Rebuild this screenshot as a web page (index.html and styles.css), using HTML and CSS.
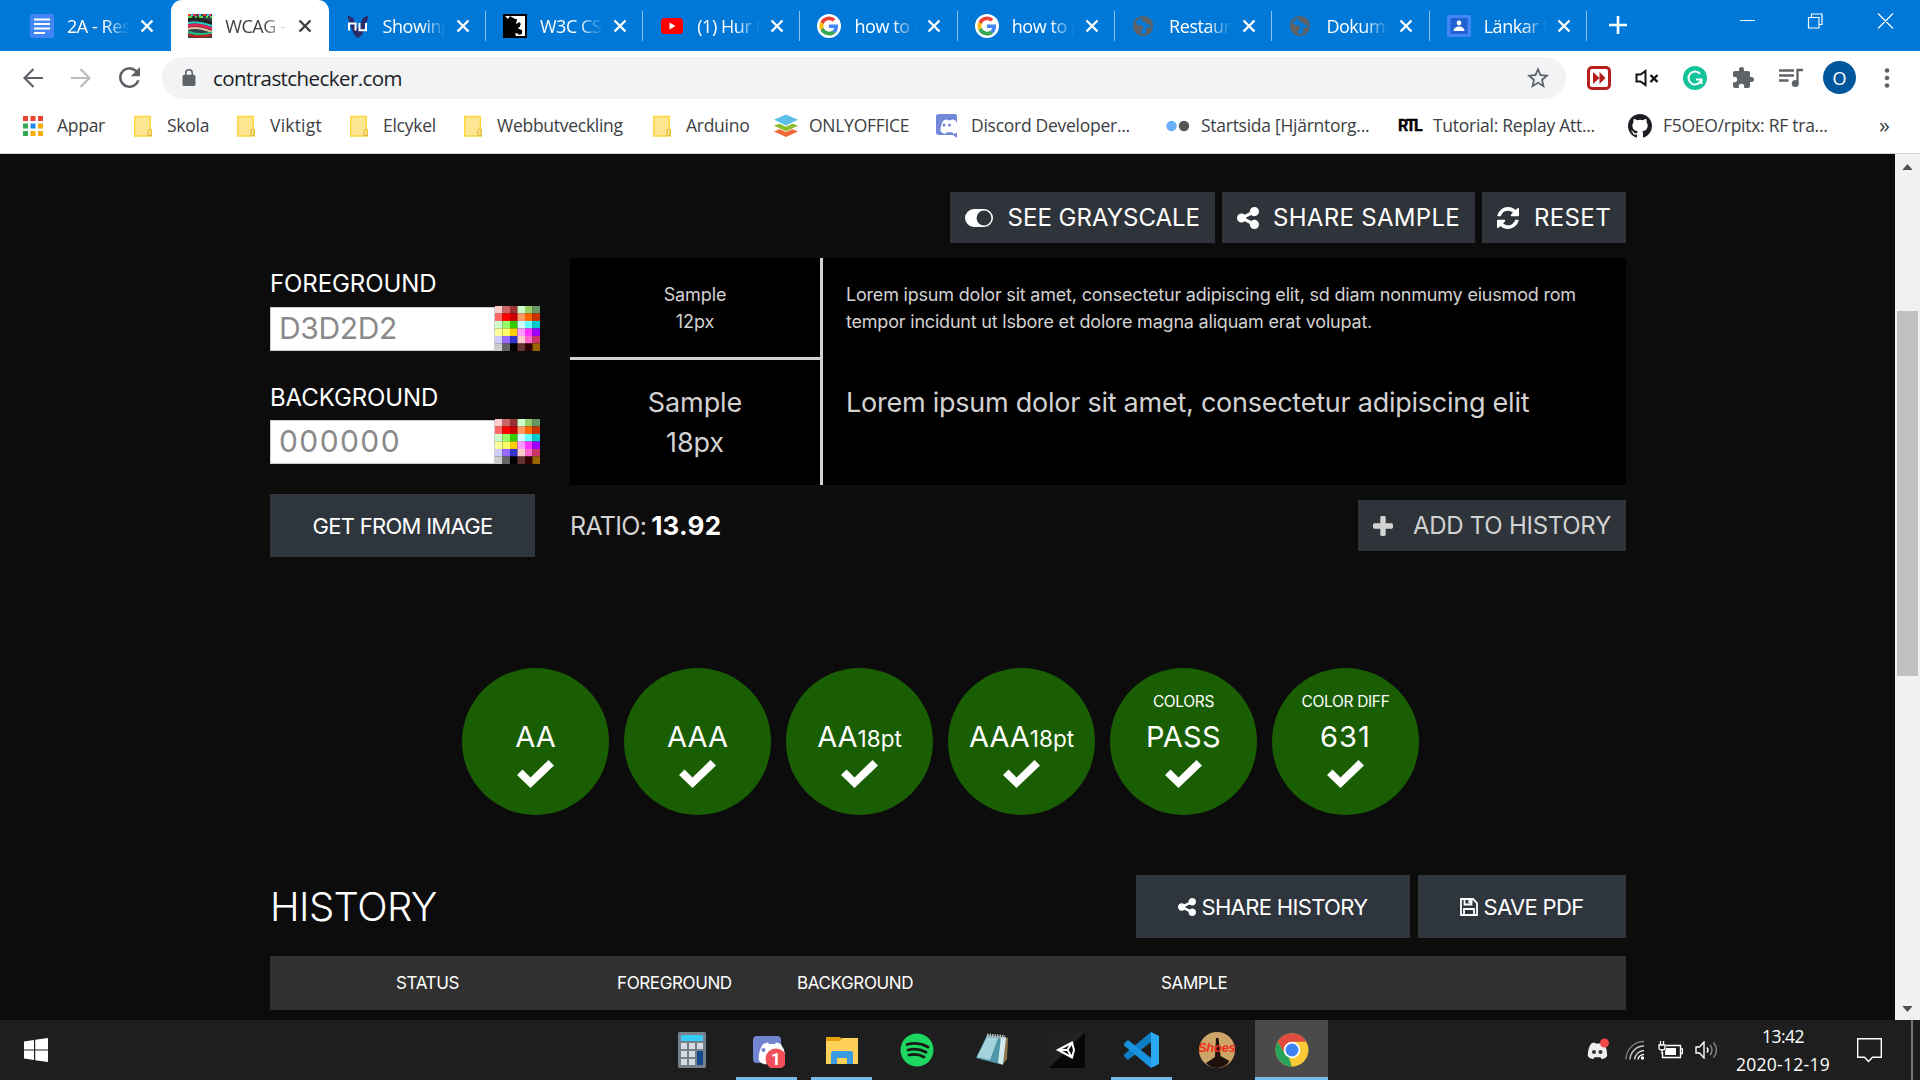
FILE: index.html
```html
<!DOCTYPE html>
<html lang="sv">
<head>
<meta charset="utf-8">
<title>WCAG - Contrast Checker</title>
<link rel="stylesheet" href="styles.css">
</head>
<body>
<svg class="sprites" aria-hidden="true">
  <symbol id="close" viewBox="0 0 14 14"><path d="M1.5 1.5l11 11M12.5 1.5l-11 11" stroke="currentColor" stroke-width="2.4" fill="none"/></symbol>
  <symbol id="docs" viewBox="0 0 24 24"><rect width="24" height="24" rx="2.5" fill="#4285f4"/><path d="M4 5.5h16M4 10h16M4 14.500h16M4 19h11" stroke="#fff" stroke-width="2"/></symbol>
  <symbol id="stripes" viewBox="0 0 24 24"><rect width="24" height="24" fill="#35404a"/><path d="M0 1h24" stroke="#e33" stroke-width="2" stroke-dasharray="3 2"/><path d="M0 1h24" stroke="#3cf" stroke-width="2" stroke-dasharray="2 6" stroke-dashoffset="-3"/><path d="M0 3h24" stroke="#5d4" stroke-width="2" stroke-dasharray="4 3 2 2"/><path d="M0 6q8-3 24 3" stroke="#222" stroke-width="3" fill="none"/><path d="M0 9q10-2 24 3" stroke="#2cc" stroke-width="2" fill="none"/><path d="M0 12q10-3 24 3" stroke="#d25" stroke-width="3" fill="none"/><path d="M0 15q9-3 24 3" stroke="#e8c0a0" stroke-width="2" fill="none"/><path d="M0 18q10 4 24 1" stroke="#2b8" stroke-width="2.500" fill="none"/><path d="M0 21q10 3 24 0" stroke="#b22" stroke-width="2.500" fill="none"/></symbol>
  <symbol id="nu" viewBox="0 0 24 24"><path d="M1 1l6 3 5 11 5-11 6-3-7 20-4 3-4-3z" fill="#2b2a6b"/><path d="M3 16.500v-7h6.500v7M13.500 9v7.300h6.500V9" fill="none" stroke="#fff" stroke-width="2"/></symbol>
  <symbol id="w3c" viewBox="0 0 24 24"><rect width="24" height="24" fill="#000"/><path d="M2 2h20v20h-9l-1-3 4 1 2-3-3-3 3-4-2-2-2 2-3-1 1-4-5-3-2 3z" fill="#fff"/><path d="M9 5h5l-1 5 3-1 1 4-4 1-1-3-3-1 2-3zM15 15l4 1v4l-4 1 2-3z" fill="#000"/></symbol>
  <symbol id="youtube" viewBox="0 0 24 24"><rect x="1" y="4" width="22" height="16" rx="3.500" fill="#f00"/><path d="M9.500 8.500v7l6-3.500z" fill="#fff"/></symbol>
  <symbol id="google" viewBox="0 0 48 48"><circle cx="24" cy="24" r="24" fill="#fff"/><g transform="translate(5 5) scale(.79)"><path fill="#EA4335" d="M24 9.500c3.540 0 6.710 1.220 9.210 3.600l6.850-6.850C35.900 2.380 30.470 0 24 0 14.620 0 6.510 5.380 2.560 13.220l7.980 6.190C12.430 13.720 17.740 9.500 24 9.500z"/><path fill="#4285F4" d="M46.980 24.550c0-1.570-.15-3.090-.38-4.550H24v9.020h12.940c-.58 2.960-2.260 5.480-4.780 7.180l7.730 6c4.510-4.180 7.090-10.360 7.090-17.650z"/><path fill="#FBBC05" d="M10.530 28.590c-.48-1.450-.76-2.990-.76-4.590s.27-3.140.76-4.590l-7.980-6.190C.92 16.460 0 20.120 0 24c0 3.880.92 7.540 2.560 10.780l7.970-6.190z"/><path fill="#34A853" d="M24 48c6.480 0 11.930-2.130 15.890-5.810l-7.730-6c-2.150 1.450-4.920 2.300-8.160 2.300-6.260 0-11.570-4.220-13.470-9.910l-7.980 6.190C6.510 42.620 14.620 48 24 48z"/></g></symbol>
  <symbol id="globe" viewBox="0 0 24 24"><circle cx="11" cy="12" r="9" fill="none" stroke="#5f6368" stroke-width="2.200"/><path d="M3 9c3 3 7 1 8 4s-3 3-2 6l1 2C5 21 1 15 3 9zM10 3c1 3-2 4 2 5s3 4 7 3l1-1c-1-4-5-8-10-7zM14 14l4-1 1 3-5 4z" fill="#5f6368"/></symbol>
  <symbol id="classroom" viewBox="0 0 24 24"><rect width="24" height="22" y="1" rx="1.500" fill="#4285f4"/><rect x="3.500" y="4" width="17" height="16" fill="#1d62d0"/><circle cx="12" cy="9" r="2.400" fill="#fff"/><path d="M6.500 17c0-3 3-4.500 5.500-4.500s5.500 1.500 5.500 4.500z" fill="#fff"/></symbol>
  <symbol id="folder" viewBox="0 0 18 22"><path d="M.7 1.500h15.600v13.500h1v6H.7z" fill="#ffe692" stroke="#fcd53f" stroke-width="1.400"/><path d="M14 20.500v-4.500q0-2 1.600-2t1.600 2v4.500z" fill="#ffe692" stroke="#e0b93a" stroke-width="1.200"/></symbol>
  <symbol id="discord" viewBox="0 0 24 24"><path d="M6 5.500Q9 4 9.500 4.500l.5.800h4l.5-.8q.5-.5 3.500 1 3 4 3 10.500-1.500 2.500-5 3l-1.200-1.800H9.200L8 19q-3.500-.5-5-3 0-6.500 3-10.500z"/></symbol>
  <symbol id="share" viewBox="0 0 1536 1536"><path transform="translate(0 -128)" fill="currentColor" d="M1216 1024q133 0 226.500 93.500t93.500 226.500-93.500 226.500-226.500 93.500-226.500-93.500-93.500-226.500q0-12 2-34l-360-180q-92 86-218 86-133 0-226.500-93.500t-93.500-226.500 93.500-226.500 226.500-93.500q126 0 218 86l360-180q-2-22-2-34 0-133 93.500-226.500t226.500-93.500 226.500 93.500 93.500 226.500-93.500 226.500-226.500 93.500q-126 0-218-86l-360 180q2 22 2 34t-2 34l360 180q92-86 218-86z"/></symbol>
  <symbol id="check" viewBox="0 0 37 28"><path d="M5.500 9.500L0 15l13.500 13L37 5.500 31.500 0l-18 17.500z" fill="#fff"/></symbol>
  <symbol id="palette" viewBox="0 0 6 6" preserveAspectRatio="none">
    <g stroke-width="1.020" stroke-dasharray="1 5" fill="none">
      <path d="M0 .5h6" stroke="#fcc"/><path d="M0 .5h6" stroke="#c66" stroke-dashoffset="-1"/><path d="M0 .5h6" stroke="#933" stroke-dashoffset="-2"/><path d="M0 .5h6" stroke="#cfc" stroke-dashoffset="-3"/><path d="M0 .5h6" stroke="#9c6" stroke-dashoffset="-4"/><path d="M0 .5h6" stroke="#696" stroke-dashoffset="-5"/>
      <path d="M0 1.500h6" stroke="#f66"/><path d="M0 1.500h6" stroke="#f00" stroke-dashoffset="-1"/><path d="M0 1.500h6" stroke="#c00" stroke-dashoffset="-2"/><path d="M0 1.500h6" stroke="#f96" stroke-dashoffset="-3"/><path d="M0 1.500h6" stroke="#f60" stroke-dashoffset="-4"/><path d="M0 1.500h6" stroke="#c30" stroke-dashoffset="-5"/>
      <path d="M0 2.500h6" stroke="#cfc"/><path d="M0 2.500h6" stroke="#9f6" stroke-dashoffset="-1"/><path d="M0 2.500h6" stroke="#3c0" stroke-dashoffset="-2"/><path d="M0 2.500h6" stroke="#cff" stroke-dashoffset="-3"/><path d="M0 2.500h6" stroke="#6ff" stroke-dashoffset="-4"/><path d="M0 2.500h6" stroke="#0cc" stroke-dashoffset="-5"/>
      <path d="M0 3.500h6" stroke="#ff9"/><path d="M0 3.500h6" stroke="#ff6" stroke-dashoffset="-1"/><path d="M0 3.500h6" stroke="#fc0" stroke-dashoffset="-2"/><path d="M0 3.500h6" stroke="#f9f" stroke-dashoffset="-3"/><path d="M0 3.500h6" stroke="#f3f" stroke-dashoffset="-4"/><path d="M0 3.500h6" stroke="#90f" stroke-dashoffset="-5"/>
      <path d="M0 4.500h6" stroke="#ccf"/><path d="M0 4.500h6" stroke="#96f" stroke-dashoffset="-1"/><path d="M0 4.500h6" stroke="#33c" stroke-dashoffset="-2"/><path d="M0 4.500h6" stroke="#fcc" stroke-dashoffset="-3"/><path d="M0 4.500h6" stroke="#f6c" stroke-dashoffset="-4"/><path d="M0 4.500h6" stroke="#c36" stroke-dashoffset="-5"/>
      <path d="M0 5.500h6" stroke="#ccc"/><path d="M0 5.500h6" stroke="#666" stroke-dashoffset="-1"/><path d="M0 5.500h6" stroke="#000" stroke-dashoffset="-2"/><path d="M0 5.500h6" stroke="#633" stroke-dashoffset="-3"/><path d="M0 5.500h6" stroke="#300" stroke-dashoffset="-4"/><path d="M0 5.500h6" stroke="#960" stroke-dashoffset="-5"/>
    </g>
  </symbol>
</svg>

<header class="tabs">
  <div class="tab first"><svg><use href="#docs"/></svg><span>2A - Res</span><svg class="x"><use href="#close"/></svg></div>
  <div class="tab active"><svg><use href="#stripes"/></svg><span>WCAG - C</span><svg class="x"><use href="#close"/></svg></div>
  <div class="tab"><svg><use href="#nu"/></svg><span>Showing</span><svg class="x"><use href="#close"/></svg></div>
  <div class="tab"><svg><use href="#w3c"/></svg><span>W3C CSS</span><svg class="x"><use href="#close"/></svg></div>
  <div class="tab"><svg><use href="#youtube"/></svg><span>(1) Hur t</span><svg class="x"><use href="#close"/></svg></div>
  <div class="tab"><svg><use href="#google"/></svg><span>how to r</span><svg class="x"><use href="#close"/></svg></div>
  <div class="tab"><svg><use href="#google"/></svg><span>how to p</span><svg class="x"><use href="#close"/></svg></div>
  <div class="tab"><svg><use href="#globe"/></svg><span>Restaura</span><svg class="x"><use href="#close"/></svg></div>
  <div class="tab"><svg><use href="#globe"/></svg><span>Dokume</span><svg class="x"><use href="#close"/></svg></div>
  <div class="tab"><svg><use href="#classroom"/></svg><span>Länkar f</span><svg class="x"><use href="#close"/></svg></div>
  <svg class="newtab" viewBox="0 0 18 18"><path d="M9 0v18M0 9h18" stroke="#fff" stroke-width="2.600"/></svg>
  <svg class="winctl" viewBox="0 0 154 16"><path d="M0 7.500h15M68.500 4.500h10.500v10.500h-10.500zM71.500 4.500v-3.500h10.500v10.500h-3M138 .5l15 15M153 .5l-15 15" fill="none" stroke="#fff" stroke-width="1.200"/></svg>
</header>

<nav class="toolbar">
  <svg class="back" viewBox="0 0 20 20"><path d="M20 10H2M10.500 1L1.500 10l9 9" fill="none" stroke="#5f6368" stroke-width="2.200"/></svg>
  <svg class="fwd" viewBox="0 0 20 20"><path d="M0 10h18M9.500 1l9 9-9 9" fill="none" stroke="#babcbe" stroke-width="2.200"/></svg>
  <svg class="reload" viewBox="4 4 16 16"><path d="M17.650 6.350A7.950 7.950 0 0012 4a8 8 0 107.730 10h-2.080A6 6 0 1112 6c1.660 0 3.140.69 4.220 1.780L13 11h7V4z" fill="#5f6368"/></svg>
  <div class="omnibox">
    <svg class="lock" viewBox="4 1 16 21"><path d="M18 8h-1V6A5 5 0 007 6v2H6a2 2 0 00-2 2v10a2 2 0 002 2h12a2 2 0 002-2V10a2 2 0 00-2-2zM9 6a3 3 0 016 0v2H9z" fill="#5f6368"/></svg>
    <span class="url">contrastchecker.com</span>
    <svg class="star" viewBox="2 2 20 20"><path d="M22 9.240l-7.190-.62L12 2 9.190 8.630 2 9.240l5.460 4.730L5.820 21 12 17.270 18.180 21l-1.630-7.030zM12 15.400l-3.760 2.270 1-4.280-3.320-2.880 4.380-.38L12 6.100l1.710 4.040 4.380.38-3.320 2.880 1 4.280z" fill="#5f6368"/></svg>
  </div>
  <div class="extensions">
    <svg viewBox="0 0 24 24"><rect x="1.500" y="1.500" width="21" height="21" rx="3.500" fill="#fff" stroke="#b3201f" stroke-width="3"/><path d="M6 6l6.500 6L6 18zM12.500 6l6 6-6 6z" fill="#b3201f"/></svg>
    <svg viewBox="0 0 24 24"><path d="M1.500 8.500h4L10.500 5v14L5.500 15.500h-4z" fill="none" stroke="#111" stroke-width="2"/><path d="M15.500 9l7 7M22.500 9l-7 7" stroke="#111" stroke-width="2.400"/></svg>
    <svg viewBox="0 0 24 24"><circle cx="12" cy="12" r="12" fill="#15c39a"/><path d="M17 7.800A6.500 6.500 0 1018 14.500M13 13.500h5.500V18" fill="none" stroke="#fff" stroke-width="2"/></svg>
    <svg viewBox="0 0 24 24"><path d="M20.500 11H19V7a2 2 0 00-2-2h-4V3.500a2.500 2.500 0 00-5 0V5H4a2 2 0 00-2 2v3.800h1.500a2.700 2.700 0 010 5.400H2V20a2 2 0 002 2h3.800v-1.500a2.700 2.700 0 015.400 0V22H17a2 2 0 002-2v-4h1.500a2.500 2.500 0 000-5z" fill="#5f6368"/></svg>
    <svg viewBox="0 0 24 24"><path d="M0 4.500h15M0 9.500h15M0 14.500h9.500M18.500 17V4H24" fill="none" stroke="#5f6368" stroke-width="2.300"/><circle cx="16.300" cy="17.500" r="3.500" fill="#5f6368"/></svg>
    <span class="avatar">O</span>
    <svg class="menu" viewBox="0 0 6 20"><g fill="#5f6368"><circle cx="3" cy="2.500" r="2.300"/><circle cx="3" cy="10" r="2.300"/><circle cx="3" cy="17.500" r="2.300"/></g></svg>
  </div>
</nav>

<nav class="bookmarks">
  <a class="apps"><svg viewBox="0 0 20 20"><g fill="#ea4335"><path d="M0 0h5v5H0zM7.500 0h5v5h-5zM15 0h5v5h-5z"/></g><path fill="#34a853" d="M0 7.500h5v5H0zM0 15h5v5H0z"/><path fill="#1a8cf0" d="M7.500 7.500h5v5h-5z"/><path fill="#fbab05" d="M15 7.500h5v5h-5zM7.500 15h5v5h-5zM15 15h5v5h-5z"/></svg><span>Appar</span></a>
  <a class="dir"><svg><use href="#folder"/></svg><span>Skola</span></a>
  <a class="dir"><svg><use href="#folder"/></svg><span class="wide">Viktigt</span></a>
  <a class="dir"><svg><use href="#folder"/></svg><span>Elcykel</span></a>
  <a class="dir"><svg><use href="#folder"/></svg><span>Webbutveckling</span></a>
  <a class="dir"><svg><use href="#folder"/></svg><span>Arduino</span></a>
  <a class="site"><svg viewBox="0 0 24 24"><path d="M12 12.500l12 5-12 5.500-12-5.500z" fill="#f0693a"/><path d="M12 7.500l12 5-12 5.500-12-5.500z" fill="#fff"/><path d="M12 7l12 4.800-12 5.500-12-5.500z" fill="#8bbd2c"/><path d="M12 2l12 5-12 5.800L0 7z" fill="#fff"/><path d="M12 .5l12 5.300-12 5.600L0 5.800z" fill="#5cc0e8"/></svg><span>ONLYOFFICE</span></a>
  <a class="site"><svg viewBox="0 0 24 24"><path d="M3 0h16q2 0 2 2v22l-4-3H3q-3 0-3-2.500V2Q0 0 3 0z" fill="#7289da"/><svg x="1.500" y="1" width="18" height="18" viewBox="0 0 24 24" fill="#fff"><use href="#discord"/></svg><circle cx="8" cy="11" r="1.500" fill="#7289da"/><circle cx="13.500" cy="11" r="1.500" fill="#7289da"/></svg><span>Discord Developer...</span></a>
  <a class="site"><svg viewBox="0 0 24 24"><circle cx="5.500" cy="12" r="5.200" fill="#6ab0f9"/><circle cx="18" cy="12" r="5.200" fill="#555"/></svg><span>Startsida [Hjärntorg...</span></a>
  <a class="site"><b class="rtl">RTL</b><span>Tutorial: Replay Att...</span></a>
  <a class="site"><svg viewBox="0 0 16 16"><path fill="#1b1f23" d="M8 0C3.580 0 0 3.580 0 8c0 3.540 2.290 6.530 5.470 7.590.4.070.55-.17.55-.38 0-.19-.01-.82-.01-1.490-2.010.37-2.530-.49-2.690-.94-.09-.23-.48-.94-.82-1.130-.28-.15-.68-.52-.01-.53.63-.01 1.080.58 1.230.82.72 1.210 1.870.87 2.330.66.07-.52.28-.87.51-1.070-1.780-.2-3.640-.89-3.640-3.950 0-.87.31-1.590.82-2.150-.08-.2-.36-1.020.08-2.120 0 0 .67-.21 2.200.82a7.400 7.400 0 014 0c1.530-1.040 2.200-.82 2.200-.82.44 1.100.16 1.920.08 2.120.51.56.82 1.270.82 2.150 0 3.070-1.870 3.750-3.650 3.950.29.25.54.73.54 1.480 0 1.070-.01 1.930-.01 2.200 0 .21.15.46.55.38A8 8 0 0016 8c0-4.420-3.580-8-8-8z"/></svg><span>F5OEO/rpitx: RF tra...</span></a>
  <a class="more">»</a>
</nav>

<div class="viewport">
<main class="page">
  <div class="actions">
    <a class="btn see"><svg viewBox="0 0 28 18"><path d="M9 0h10a9 9 0 010 18H9A9 9 0 019 0zm10 1.600a7.400 7.400 0 000 14.800 7.400 7.400 0 000-14.800z" fill="#fff" fill-rule="evenodd"/></svg><span>SEE GRAYSCALE</span></a>
    <a class="btn share-sample"><svg><use href="#share"/></svg><span>SHARE SAMPLE</span></a>
    <a class="btn reset"><svg viewBox="0 128 1536 1536"><path fill="#fff" d="M1511 1056q0 5-1 7-64 268-268 434.500t-478 166.500q-146 0-282.500-55t-243.500-157l-129 129q-19 19-45 19t-45-19-19-45v-448q0-26 19-45t45-19h448q26 0 45 19t19 45-19 45l-137 137q71 66 161 102t187 36q134 0 250-65t186-179q11-17 53-117 8-23 30-23h192q13 0 22.500 9.500t9.500 22.500zm25-800v448q0 26-19 45t-45 19h-448q-26 0-45-19t-19-45 19-45l138-138q-148-137-349-137-134 0-250 65t-186 179q-11 17-53 117-8 23-30 23h-199q-13 0-22.500-9.500t-9.500-22.500v-7q65-268 270-434.500t480-166.500q146 0 284 55.500t245 156.500l130-129q19-19 45-19t45 19 19 45z"/></svg><span>RESET</span></a>
  </div>

  <div class="checker">
    <section class="inputs">
      <label class="fg">FOREGROUND</label>
      <div class="field"><div class="value">D3D2D2</div><svg><use href="#palette"/></svg></div>
      <label class="bg">BACKGROUND</label>
      <div class="field"><div class="value digits">000000</div><svg><use href="#palette"/></svg></div>
      <a class="from-image">GET FROM IMAGE</a>
    </section>
    <section class="result">
      <div class="samples">
        <div class="cell small"><span>Sample</span><span>12px</span></div>
        <div class="lorem small"><span>Lorem ipsum dolor sit amet, consectetur adipiscing elit, sd diam nonmumy eiusmod rom</span><span>tempor incidunt ut lsbore et dolore magna aliquam erat volupat.</span></div>
        <div class="cell large"><span>Sample</span><span>18px</span></div>
        <div class="lorem large"><span>Lorem ipsum dolor sit amet, consectetur adipiscing elit</span></div>
      </div>
      <div class="ratio-row">
        <p class="ratio"><span>RATIO:</span><b>13.92</b></p>
        <a class="btn add"><svg viewBox="0 192 1408 1408"><path fill="currentColor" d="M1408 800v192q0 40-28 68t-68 28H896v416q0 40-28 68t-68 28H608q-40 0-68-28t-28-68v-416H96q-40 0-68-28T0 992V800q0-40 28-68t68-28h416V288q0-40 28-68t68-28h192q40 0 68 28t28 68v416h416q40 0 68 28t28 68z"/></svg><span>ADD TO HISTORY</span></a>
      </div>
    </section>
  </div>

  <div class="badges">
    <div class="badge"><small></small><p>AA</p><svg><use href="#check"/></svg></div>
    <div class="badge"><small></small><p>AAA</p><svg><use href="#check"/></svg></div>
    <div class="badge"><small></small><p>AA<i>18pt</i></p><svg><use href="#check"/></svg></div>
    <div class="badge"><small></small><p>AAA<i>18pt</i></p><svg><use href="#check"/></svg></div>
    <div class="badge"><small>COLORS</small><p class="pass">PASS</p><svg><use href="#check"/></svg></div>
    <div class="badge"><small>COLOR DIFF</small><p class="num">631</p><svg><use href="#check"/></svg></div>
  </div>

  <div class="history-head">
    <h2>HISTORY</h2>
    <a class="hbtn share-history"><svg><use href="#share"/></svg><span>SHARE HISTORY</span></a>
    <a class="hbtn save"><svg viewBox="0 0 18 18"><path d="M1 1h12l4 4v12H1zM4 17v-6h10v6M4.500 1v5.500h7V1" fill="none" stroke="#fff" stroke-width="1.800"/><path d="M8.500 1.500H11V5.500H8.500z" fill="#fff"/></svg><span>SAVE PDF</span></a>
  </div>
  <div class="thead">
    <span>STATUS</span><span>FOREGROUND</span><span>BACKGROUND</span><span>SAMPLE</span>
  </div>
</main>
<aside class="scrollbar">
  <svg viewBox="0 0 12 7"><path d="M0 7l6-7 6 7z" fill="#505050"/></svg>
  <div class="thumb"></div>
  <svg viewBox="0 0 12 7"><path d="M0 0l6 7 6-7z" fill="#505050"/></svg>
</aside>
</div>

<footer class="taskbar">
  <svg class="start" viewBox="0 0 24 24"><path d="M0 3.400L10 2v9.500H0zM11.200 1.800L24 0v11.500H11.200zM0 12.500h10V22L0 20.600zM11.200 12.500H24V24l-12.800-1.800z" fill="#fff"/></svg>
  <div class="tasks">
    <div class="task"><svg viewBox="0 0 36 36"><rect x="4" width="28" height="36" rx="1.500" fill="#75808a"/><path d="M7 3h22v6H7z" fill="#35cdf5"/><path d="M7 11h6v6H7zM15 11h6v6h-6zM23 11h6v6h-6zM7 19h6v6H7zM15 19h6v6h-6zM7 27h6v6H7zM15 27h6v6h-6z" fill="#d6dbe2"/><path d="M23 19h6v14h-6z" fill="#114a8b"/></svg></div>
    <div class="task open"><svg viewBox="0 0 36 36"><rect x="4" y="4" width="28" height="27" rx="4" fill="#7184cf"/><svg x="5" y="4" width="26" height="26" viewBox="0 0 24 24" fill="#fff"><use href="#discord"/></svg><circle cx="14.500" cy="18" r="2" fill="#7184cf"/><circle cx="27" cy="27" r="10.500" fill="#f25058"/></svg><b class="count">1</b></div>
    <div class="task open"><svg viewBox="0 0 36 36"><path d="M2 5h14l2 3v5H2z" fill="#e3a008"/><path d="M2 9h14l2-3h16v26H2z" fill="#ffd158"/><path d="M7 32V21q0-2 2-2h18q2 0 2 2v11h-6v-6H13v6z" fill="#3a9be3"/></svg></div>
    <div class="task"><svg viewBox="0 0 36 36"><circle cx="18" cy="18" r="16.500" fill="#1ed760"/><path d="M8 12.500q11-3 21 2.500M9 18q9.500-2.500 18 2.300M10 23q8-2 15 2" fill="none" stroke="#191919" stroke-width="2.800" stroke-linecap="round"/></svg></div>
    <div class="task"><svg viewBox="0 0 36 36"><path d="M31 5l3 1-1 21-4 5z" fill="#8f7548"/><path d="M13 3l19 2-3 28L2 26z" fill="#4f96a8"/><path d="M13 5l11 1-8 22-13-3z" fill="#a5d3dc"/><path d="M27 5l5 .5-3 27-5-1.500z" fill="#d4e9eb"/><path d="M13 3.500l18 1.500" stroke="#bbb" stroke-width="4" stroke-dasharray="1.500 1"/></svg></div>
    <div class="task"><svg viewBox="0 0 36 36"><path d="M0 0h36v36H0z" fill="#070707"/><path d="M0 0h36L0 36z" fill="#222"/><path d="M9 18L23 10.500 25 18l-2 7.500zM9 18h9.500M18.500 18L23 10.500M18.500 18L23 25.500" fill="none" stroke="#fff" stroke-width="2"/></svg></div>
    <div class="task open"><svg viewBox="0 0 36 36"><path d="M27 0l8 4v28l-8 4z" fill="#2aa9f2"/><path d="M27 0v10L4 28l-4-3.500v-2z" fill="#0d7ec4"/><path d="M27 36V26L4 8 0 11.500v2z" fill="#1793dd"/></svg></div>
    <div class="task"><svg viewBox="0 0 36 36"><circle cx="18" cy="18" r="18" fill="#cda569"/><path d="M17 6h2.500l2 18 9 5Q26 36 18 36 11 36 7 31l9-6z" fill="#20100b"/></svg><b class="shoes">Shoes</b></div>
    <div class="task open current"><svg viewBox="0 0 36 36"><circle cx="18" cy="18" r="16.500" fill="#fbc934"/><path d="M3.700 9.700A16.500 16.500 0 0132.300 9.700H18l-7.200 12.500z" fill="#e04a3f"/><path d="M3.700 9.700L11 22.200 18 26.200 17.500 34.500A16.500 16.500 0 013.700 9.700z" fill="#27a35a"/><path d="M25.200 22.200L18 34.500l-3-8z" fill="#fbc934"/><circle cx="18" cy="18" r="8.300" fill="#fff"/><circle cx="18" cy="18" r="6.500" fill="#3f83f1"/></svg></div>
  </div>
  <div class="tray">
    <svg class="t-discord" viewBox="0 0 24 24"><g transform="translate(-1.500 -.5) scale(1.080 1.150)" fill="#eee"><use href="#discord"/></g><circle cx="8" cy="14" r="2" fill="#333"/><circle cx="14.500" cy="14" r="2" fill="#333"/><circle cx="18.500" cy="5" r="4.500" fill="#f04747"/></svg>
    <svg class="t-wifi" viewBox="0 0 20 20"><g fill="none" stroke-width="1.400"><path d="M1 19.500A18 18 0 0119 1.500" stroke="#777"/><path d="M5 19.500A14 14 0 0119 6M9.500 19.500A10 10 0 0119 10.500" stroke="#ccc"/><path d="M13 19.500A6 6 0 0119 14.500" stroke="#fff"/></g><circle cx="17.500" cy="18" r="1.700" fill="#fff"/></svg>
    <svg class="t-battery" viewBox="0 0 25 18"><path d="M8 4.500h14.500v12H4.500V11M23 8h1.500v4.500H23" fill="none" stroke="#fff" stroke-width="1.400"/><path d="M8 7h10v7H7v-3z" fill="#fff"/><path d="M1 4h6v3q0 2-3 2T1 7zM2.500 4V0M5.500 4V0M4 9v4" fill="none" stroke="#fff" stroke-width="1.300"/></svg>
    <svg class="t-sound" viewBox="0 0 23 18"><path d="M1 6h3.500L9 1v16l-4.500-5H1z" fill="none" stroke="#fff" stroke-width="1.400"/><path d="M12 6.500q2 2.500 0 5" fill="none" stroke="#fff" stroke-width="1.400"/><path d="M15 4q4 5 0 10M18.500 1.500q6 7.500 0 15" fill="none" stroke="#888" stroke-width="1.400"/></svg>
    <div class="clock"><span class="time">13:42</span><span class="date">2020-12-19</span></div>
    <svg class="t-note" viewBox="0 0 25 25"><path d="M.7.700h23.600v18.600H15.500L11.500 23.500 7.500 19.300H.7z" fill="none" stroke="#fff" stroke-width="1.400"/></svg>
    <i class="desktop-edge"></i>
  </div>
</footer>
</body>
</html>
```
FILE: styles.css
```css
* { box-sizing: border-box; }
body { margin: 0; width: 1920px; height: 1080px; overflow: hidden; background: #0c0c0c; font-family: "Open Sans", sans-serif; display: flex; flex-direction: column; }
svg { display: block; flex: none; }
.sprites { width: 0; height: 0; position: absolute; }
.tabs { height: 51px; background: #0078d7; display: flex; padding-left: 14px; color: #fff; }
.tab { flex: none; width: 157.300px; height: 51px; display: flex; align-items: center; padding-left: 17px; font-size: 18px; letter-spacing: -.45px; background: linear-gradient(#8cc3ee, #8cc3ee) right 11px / 1px 30px no-repeat; }
.tab svg { width: 24px; height: 24px; }
.tab span { width: 64px; margin-left: 13px; overflow: hidden; white-space: nowrap; -webkit-mask-image: linear-gradient(90deg, #000 60%, transparent 98%); mask-image: linear-gradient(90deg, #000 60%, transparent 98%); }
.tab .x { width: 14px; height: 14px; margin-left: 9px; }
.tab.first { background: none; padding-left: 16px; }
.tab.active { background: #fff; color: #3c4043; border-radius: 11px 11px 0 0; }
.newtab { width: 18px; height: 18px; margin: 16px 0 0 22px; }
.winctl { width: 154px; height: 16px; margin: 13px 0 0 113px; }

.toolbar { height: 52px; background: #fff; display: flex; align-items: center; padding: 1px 0 0 23px; }
.back, .fwd { width: 20px; height: 20px; }
.fwd { margin-left: 28px; }
.reload { width: 21px; height: 21px; margin-left: 28px; }
.omnibox { width: 1404px; height: 42px; margin-left: 22px; background: #f1f3f4; border-radius: 21px; display: flex; align-items: center; padding: 0 17px 0 20px; }
.lock { width: 14px; height: 17px; }
.url { margin-left: 17px; font-size: 20.500px; letter-spacing: -.57px; color: #202124; flex: 1; }
.star { width: 22px; height: 22px; }
.extensions { display: flex; align-items: center; gap: 24px; margin-left: 21px; }
.extensions svg { width: 24px; height: 24px; }
.avatar { width: 33px; height: 33px; margin: 0 0 0 -4px; border-radius: 50%; background: #01579b; color: #fff; display: grid; place-items: center; font-size: 18px; }
.extensions .menu { width: 6px; height: 20px; margin-left: 4px; }

.bookmarks { height: 51px; background: #fff; border-bottom: 1px solid #d4d6d9; display: grid; grid-template-columns: 111px 103px 113px 114px 189px 121px 162px 230px 232px 230px 251px auto; align-items: center; padding: 0 0 5px 23px; font-size: 17.500px; letter-spacing: -.27px; color: #3c4043; white-space: nowrap; }
.bookmarks a { display: flex; align-items: center; }
.bookmarks span { margin-top: -1px; }
.bookmarks .wide { letter-spacing: .2px; }
.apps svg { width: 20px; height: 20px; margin-right: 14px; }
.dir svg { width: 18px; height: 22px; margin-right: 15px; }
.site svg, .rtl { width: 24px; height: 24px; margin-right: 11px; }
.rtl { font: bold 16px/24px Roboto, sans-serif; color: #000; letter-spacing: -1.800px; width: 24px; -webkit-text-stroke: .4px #000; }
.more { font-size: 22px; margin-top: -4px; }

.viewport { flex: 1; display: flex; min-height: 0; }
.page { flex: 1; padding: 38px 269px 0 270px; color: #fff; font-family: Inter, sans-serif; overflow: hidden; }
.scrollbar { width: 25px; background: #f1f1f1; display: flex; flex-direction: column; align-items: center; justify-content: space-between; padding: 10px 0 8px; }
.scrollbar svg { width: 11px; height: 6px; }
.thumb { width: 21px; height: 365px; background: #c1c1c1; margin-top: -189px; }

.actions { display: flex; justify-content: flex-end; gap: 7px; }
.btn { height: 51px; background: #2f343b; display: flex; align-items: center; gap: 15px; padding: 0 15px; font-size: 24px; white-space: nowrap; }
.btn svg { width: 22px; height: 22px; }
.see svg { width: 28px; height: 18px; }
.share-sample { letter-spacing: .3px; gap: 14px; }
.reset { letter-spacing: .36px; }

.checker { display: flex; margin-top: 15px; height: 299px; }
.inputs { width: 270px; margin-right: 30px; }
.inputs label { display: block; height: 48px; padding-top: 9px; font-size: 24px; line-height: 34px; letter-spacing: -.1px; }
.inputs .bg { margin-top: 21px; height: 47px; }
.field { display: flex; height: 45px; align-items: flex-end; }
.value { width: 225px; height: 44px; background: #fff; border: 1px solid #ccc; color: #8a8a8a; font-size: 30px; line-height: 41px; letter-spacing: -.35px; padding-left: 8px; }
.digits { letter-spacing: 1.400px; }
.field svg { width: 45px; height: 45px; }
.from-image { display: grid; place-items: center; width: 265px; height: 63px; margin-top: 30px; background: #2f353d; font-size: 22px; letter-spacing: -.72px; white-space: nowrap; }
.result { flex: 1; }
.samples { display: grid; grid-template-columns: 253px 1fr; grid-template-rows: 102px 125px; height: 227px; background: #000; color: #d3d2d2; }
.samples span { display: block; white-space: nowrap; }
.cell { border-right: 3px solid #d3d2d2; text-align: center; }
.cell.small { border-bottom: 3px solid #d3d2d2; }
.lorem { padding-left: 23px; }
.small { font-size: 18px; line-height: 27px; padding-top: 23px; letter-spacing: -.2px; }
.large { font-size: 27px; line-height: 40px; padding-top: 23px; letter-spacing: -.25px; }
.cell.small, .cell.large { letter-spacing: -.1px; }
.ratio-row { display: flex; justify-content: space-between; padding-top: 15px; }
.ratio { margin: 0; line-height: 52px; font-size: 25px; letter-spacing: -.7px; color: #d3d2d2; white-space: nowrap; }
.ratio b { color: #fff; margin-left: 5px; font-size: 26px; letter-spacing: .2px; }
.add { color: #d3d2d2; gap: 20px; letter-spacing: -.27px; }
.add svg { width: 20px; height: 20px; }

.badges { display: flex; gap: 15px; margin: 111px 0 0 192px; }
.badge { width: 147px; height: 147px; border-radius: 50%; background: #1a5e03; display: flex; flex-direction: column; align-items: center; padding-top: 22px; white-space: nowrap; }
.badge small { height: 24px; font-size: 15.500px; line-height: 24px; letter-spacing: -.34px; }
.badge p { margin: 4px 0 0; height: 42px; font-size: 29px; line-height: 38px; }
.badge .pass { letter-spacing: .35px; }
.badge .num { letter-spacing: 1.100px; }
.badge i { font-style: normal; font-size: 22.500px; }
.badge svg { width: 37px; height: 28px; }

.history-head { display: flex; align-items: center; height: 63px; margin-top: 60px; gap: 8px; }
.history-head h2 { margin: 0; flex: 1; font-size: 40px; font-weight: 300; letter-spacing: -.6px; }
.hbtn { height: 63px; display: flex; align-items: center; justify-content: center; gap: 5px; background: #2f353d; font-size: 22px; letter-spacing: -.65px; white-space: nowrap; }
.hbtn svg { width: 18px; height: 18px; }
.share-history { width: 274px; }
.save { width: 208px; }
.thead { display: grid; grid-template-columns: 221px 180px 364px 1fr; align-items: center; height: 54px; margin-top: 18px; padding-left: 126px; background: #303030; font-size: 17px; letter-spacing: -.38px; }

.taskbar { height: 60px; background: #1e1e1e; display: flex; align-items: center; color: #fff; }
.start { width: 24px; height: 24px; margin-left: 24px; }
.tasks { display: flex; margin-left: 606px; }
.task { width: 75px; height: 60px; display: flex; align-items: center; justify-content: center; position: relative; }
.task svg { width: 36px; height: 36px; }
.open { background: linear-gradient(#76b9ed, #76b9ed) center bottom / 61px 3px no-repeat; }
.current { background: linear-gradient(#76b9ed, #76b9ed) center bottom / 73px 3px no-repeat, linear-gradient(#4a4a4a, #4a4a4a) center / 73px 60px no-repeat; }
.count { position: absolute; left: 41px; top: 28px; width: 12px; text-align: center; font: bold 17px/22px Roboto, sans-serif; }
.shoes { position: absolute; left: 19px; top: 20px; width: 37px; text-align: center; color: #f0301c; font: italic bold 13px/16px "Liberation Sans", sans-serif; letter-spacing: -.3px; }
.tray { display: flex; align-items: center; flex: 1; height: 60px; justify-content: flex-end; }
.t-discord { width: 24px; height: 24px; margin-right: 15px; }
.t-wifi { width: 20px; height: 20px; margin-right: 13px; }
.t-battery { width: 25px; height: 18px; margin-right: 12px; }
.t-sound { width: 23px; height: 18px; margin-right: 18px; }
.clock { display: flex; flex-direction: column; align-items: center; width: 94px; font-size: 17.500px; line-height: 28px; white-space: nowrap; margin-right: 27px; }
.time { letter-spacing: -.5px; }
.date { letter-spacing: .27px; }
.t-note { width: 25px; height: 25px; margin-right: 29px; }
.desktop-edge { width: 2px; height: 60px; background: #777; margin-right: 7px; }
```
